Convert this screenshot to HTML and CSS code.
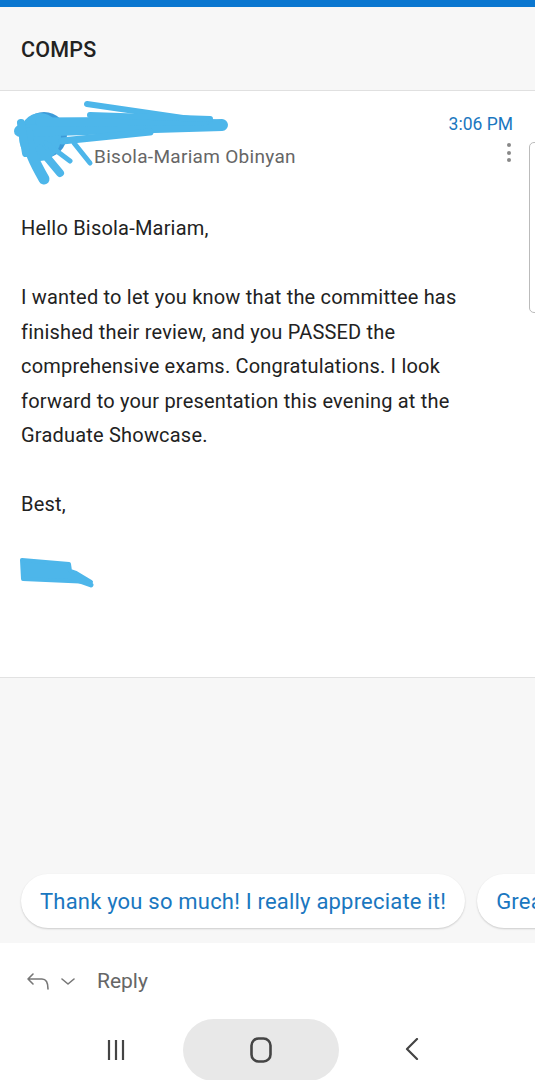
FILE: index.html
```html
<!DOCTYPE html>
<html lang="en">
<head>
    <meta charset="UTF-8">
    <meta name="viewport" content="width=device-width, initial-scale=1.0">
    <title>COMPS</title>
    <link rel="stylesheet" href="styles.css">
</head>
<body>
    <div id="screen">
        <div class="accent-bar"></div>

        <header class="subject-bar">
            <h1 class="subject">COMPS</h1>
        </header>

        <section class="message">
            <div class="sender-row">
                <div class="avatar"></div>
                <div class="sender-info">
                    <div class="sender-name">&nbsp;</div>
                    <div class="recipient">Bisola-Mariam Obinyan</div>
                </div>
                <div class="meta">
                    <div class="time">3:06 PM</div>
                    <div class="kebab"><span></span><span></span><span></span></div>
                </div>
            </div>

            <div class="body">
                <p>Hello Bisola-Mariam,</p>
                <p>I wanted to let you know that the committee has finished their review, and you PASSED the comprehensive exams. Congratulations. I look forward to your presentation this evening at the Graduate Showcase.</p>
                <p>Best,</p>
                <p class="signature">&nbsp;</p>
            </div>

            <div class="scroll-thumb"></div>

            <!-- redaction scribbles -->
            <svg class="scribble scribble-sender" width="240" height="100" viewBox="0 0 240 100">
                <g fill="#4db6ea" stroke="#4db6ea" stroke-linecap="round" stroke-linejoin="round">
                    <ellipse cx="40" cy="46" rx="21" ry="24" stroke="none"/>
                    <path d="M87 13 L 224 33" stroke-width="6" fill="none"/>
                    <path d="M20 40 L 222 34" stroke-width="12" fill="none"/>
                    <path d="M40 31 L 205 30" stroke-width="9" fill="none"/>
                    <path d="M90 24 L 210 28" stroke-width="6" fill="none"/>
                    <path d="M62 50 L 150 41" stroke-width="7" fill="none"/>
                    <path d="M28 42 C 27 58, 36 74, 44 88" stroke-width="11" fill="none"/>
                    <path d="M40 58 L 60 82" stroke-width="8" fill="none"/>
                    <path d="M46 52 L 70 70" stroke-width="5" fill="none"/>
                    <path d="M74 52 L 90 72" stroke-width="5" fill="none"/>
                    <path d="M21 32 L 26 62" stroke-width="8" fill="none"/>
                </g>
            </svg>
            <svg class="scribble scribble-sign" width="90" height="40" viewBox="0 0 90 40">
                <path d="M3 3 L 50 7 L 51 14 L 57 16 L 72 25 L 4 22 Z" fill="#4db6ea" stroke="#4db6ea" stroke-width="4" stroke-linejoin="round"/>
                <path d="M55 22 L 72 28" fill="none" stroke="#4db6ea" stroke-width="5" stroke-linecap="round"/>
            </svg>
        </section>

        <section class="suggestions">
            <button class="chip">Thank you so much! I really appreciate it!</button>
            <button class="chip">Great, thank you!</button>
        </section>

        <div class="reply-bar">
            <svg class="reply-icon" width="24" height="18" viewBox="0 0 24 18">
                <path d="M7 2 L 2 7 L 7 12 M 2 7 H 16 C 20 7, 22 10, 22 17" fill="none" stroke="#777" stroke-width="1.6" stroke-linecap="round" stroke-linejoin="round"/>
            </svg>
            <svg class="chevron-icon" width="14" height="8" viewBox="0 0 14 8">
                <path d="M1 1 L 7 6 L 13 1" fill="none" stroke="#777" stroke-width="1.6" stroke-linecap="round" stroke-linejoin="round"/>
            </svg>
            <span class="reply-label">Reply</span>
        </div>

        <nav class="system-nav">
            <svg class="nav-recents" width="20" height="20" viewBox="0 0 20 20">
                <path d="M3 0 V 20 M 10 0 V 20 M 17 0 V 20" stroke="#444" stroke-width="2.2"/>
            </svg>
            <div class="nav-home">
                <svg width="22" height="26" viewBox="0 0 22 26">
                    <rect x="1.5" y="1.5" width="19" height="23" rx="7" fill="none" stroke="#444" stroke-width="2.6"/>
                </svg>
            </div>
            <svg class="nav-back" width="14" height="22" viewBox="0 0 14 22">
                <path d="M12 1 L 2 11 L 12 21" fill="none" stroke="#444" stroke-width="2.2" stroke-linecap="round" stroke-linejoin="round"/>
            </svg>
        </nav>
    </div>
</body>
</html>
```

FILE: styles.css
```css
body, html {
    margin: 0;
    padding: 0;
    font-family: Roboto, 'Liberation Sans', sans-serif;
    background-color: #fff;
}

#screen {
    width: 535px;
    height: 1080px;
    overflow: hidden;
    display: flex;
    flex-direction: column;
}

.accent-bar {
    height: 7px;
    background-color: #0b77d0;
    flex-shrink: 0;
}

.subject-bar {
    height: 84px;
    box-sizing: border-box;
    background-color: #f7f7f7;
    border-bottom: 1px solid #e0e0e0;
    display: flex;
    align-items: center;
    padding: 2px 21px 0;
    flex-shrink: 0;
}

.subject {
    margin: 0;
    font-size: 21.5px;
    font-weight: 500;
    color: #222;
    letter-spacing: 0.2px;
}

.message {
    position: relative;
    height: 587px;
    box-sizing: border-box;
    border-bottom: 1px solid #e2e2e2;
    background-color: #fff;
    padding: 20px 0 0 21px;
    flex-shrink: 0;
}

.sender-row {
    display: flex;
    align-items: flex-start;
    height: 56px;
}

.avatar {
    width: 46px;
    height: 46px;
    border-radius: 50%;
    background-color: #3c9ad8;
    margin-top: 1px;
    flex-shrink: 0;
}

.sender-info {
    flex: 1;
    margin-left: 27px;
}

.sender-name {
    height: 24px;
    font-size: 18px;
    font-weight: 500;
}

.recipient {
    font-size: 19px;
    line-height: 22px;
    letter-spacing: 0.3px;
    color: #666;
    margin-top: 11px;
}

.meta {
    display: flex;
    flex-direction: column;
    align-items: flex-end;
    padding-right: 22px;
}

.time {
    font-size: 17.5px;
    line-height: 20px;
    color: #1a77c0;
    margin-top: 3px;
}

.kebab {
    display: flex;
    flex-direction: column;
    gap: 3.5px;
    margin-top: 9px;
    margin-right: 2px;
}

.kebab span {
    width: 4px;
    height: 4px;
    border-radius: 50%;
    background-color: #888;
}

.body {
    margin-top: 44px;
    width: 480px;
    font-size: 20px;
    line-height: 34.5px;
    letter-spacing: 0.2px;
    color: #222;
}

.body p {
    margin: 0 0 34.5px;
}

.signature {
    height: 34.5px;
}

.scroll-thumb {
    position: absolute;
    right: -8px;
    top: 51px;
    width: 12px;
    height: 169px;
    border: 1px solid #bbb;
    border-radius: 5px;
    background-color: #fff;
}

.scribble {
    position: absolute;
    pointer-events: none;
}

.scribble-sender {
    left: 0;
    top: 0;
}

.scribble-sign {
    left: 19px;
    top: 466px;
}

.suggestions {
    flex: 1;
    background-color: #f7f7f7;
    display: flex;
    align-items: flex-end;
    gap: 12px;
    padding: 0 0 15px 21px;
    overflow: hidden;
    white-space: nowrap;
}

.chip {
    flex-shrink: 0;
    height: 54px;
    padding: 0 19px;
    border: none;
    border-radius: 27px;
    background-color: #fff;
    box-shadow: 0 1px 2px rgba(0,0,0,0.18);
    font-family: inherit;
    font-size: 22px;
    letter-spacing: 0.2px;
    color: #1a77c0;
}

.reply-bar {
    height: 76px;
    display: flex;
    align-items: center;
    padding-left: 26px;
    flex-shrink: 0;
}

.chevron-icon {
    margin-left: 11px;
    margin-top: 2px;
}

.reply-label {
    margin-left: 22px;
    font-size: 21px;
    color: #666;
}

.system-nav {
    height: 61px;
    display: flex;
    align-items: flex-end;
    flex-shrink: 0;
}

.nav-recents {
    margin-left: 106px;
    margin-bottom: 20px;
}

.nav-home {
    width: 156px;
    height: 62px;
    margin-left: 57px;
    margin-bottom: -1px;
    border-radius: 31px;
    background-color: #e8e8e8;
    display: flex;
    align-items: center;
    justify-content: center;
}

.nav-back {
    margin-left: 66px;
    margin-bottom: 20px;
}
```
